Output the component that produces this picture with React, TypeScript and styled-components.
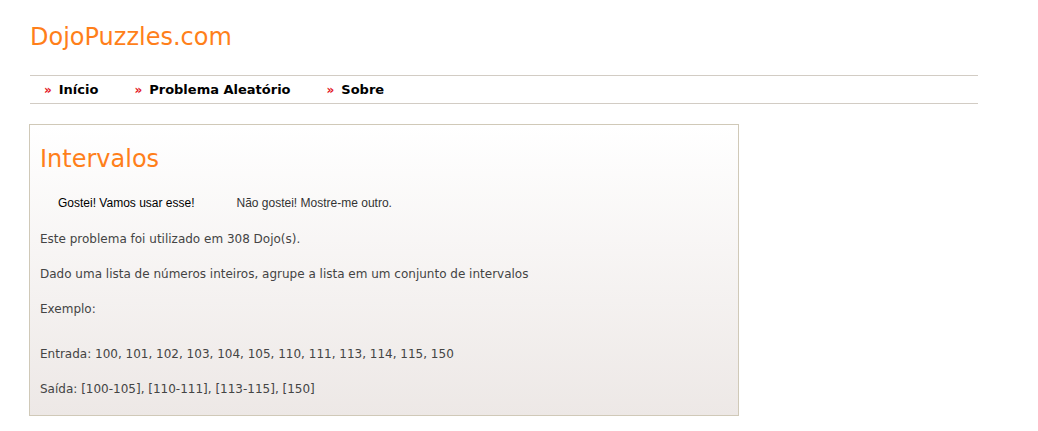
import React from 'react';
import styled, { createGlobalStyle } from 'styled-components';

const GlobalStyle = createGlobalStyle`
  html, body {
    margin: 0;
    padding: 0;
    background: #ffffff;
  }
  body {
    font-family: "DejaVu Sans", Verdana, sans-serif;
  }
`;

const Page = styled.div`
  padding: 21px 0 0 30px;
  width: 948px;
`;

const Logo = styled.h1`
  margin: 0;
  height: 33px;
  font-size: 24px;
  font-weight: normal;
  color: #ff7f1a;
  line-height: 32px;
`;

const Nav = styled.ul`
  display: flex;
  margin: 21px 0 0;
  padding: 0 0 0 14px;
  list-style: none;
  border-top: 1px solid #d2ccc4;
  border-bottom: 1px solid #d2ccc4;
  height: 27px;
  align-items: center;
  gap: 36px;
`;

const NavItem = styled.li`
  display: flex;
  align-items: center;
  gap: 7px;
  font-size: 13px;
  font-weight: bold;
  color: #000000;
`;

const Arrow = styled.span`
  color: #e3141e;
  font-size: 12px;
`;

const Box = styled.div`
  margin: 20px 0 0 -1px;
  border: 1px solid #d0c9b8;
  background: linear-gradient(to bottom, #ffffff 0%, #ede8e6 100%);
  padding: 0 10px;
  box-sizing: border-box;
  width: 710px;
  height: 292px;
  color: #444444;
`;

const Title = styled.h2`
  margin: 19px 0 0;
  font-size: 24px;
  font-weight: normal;
  color: #ff7f1a;
  line-height: 30px;
`;

const Actions = styled.div`
  display: flex;
  gap: 42px;
  margin: 22px 0 0 18px;
`;

const ActionButton = styled.button<{ $muted?: boolean }>`
  border: none;
  background: transparent;
  padding: 0;
  font-family: "Liberation Sans", Arial, sans-serif;
  font-size: 12px;
  color: ${({ $muted }) => ($muted ? '#333333' : '#000000')};
  cursor: pointer;
`;

const Para = styled.p<{ $gap?: number }>`
  margin: ${({ $gap }) => $gap ?? 20}px 0 0;
  font-size: 12px;
  line-height: 15px;
`;

export default function App() {
  return (
    <>
      <GlobalStyle />
      <Page>
        <Logo>DojoPuzzles.com</Logo>
        <Nav>
          <NavItem><Arrow>»</Arrow>Início</NavItem>
          <NavItem><Arrow>»</Arrow>Problema Aleatório</NavItem>
          <NavItem><Arrow>»</Arrow>Sobre</NavItem>
        </Nav>
        <Box>
          <Title>Intervalos</Title>
          <Actions>
            <ActionButton>Gostei! Vamos usar esse!</ActionButton>
            <ActionButton $muted>Não gostei! Mostre-me outro.</ActionButton>
          </Actions>
          <Para $gap={22}>Este problema foi utilizado em 308 Dojo(s).</Para>
          <Para>Dado uma lista de números inteiros, agrupe a lista em um conjunto de intervalos</Para>
          <Para>Exemplo:</Para>
          <Para $gap={30}>Entrada: 100, 101, 102, 103, 104, 105, 110, 111, 113, 114, 115, 150</Para>
          <Para>Saída: [100-105], [110-111], [113-115], [150]</Para>
        </Box>
      </Page>
    </>
  );
}
